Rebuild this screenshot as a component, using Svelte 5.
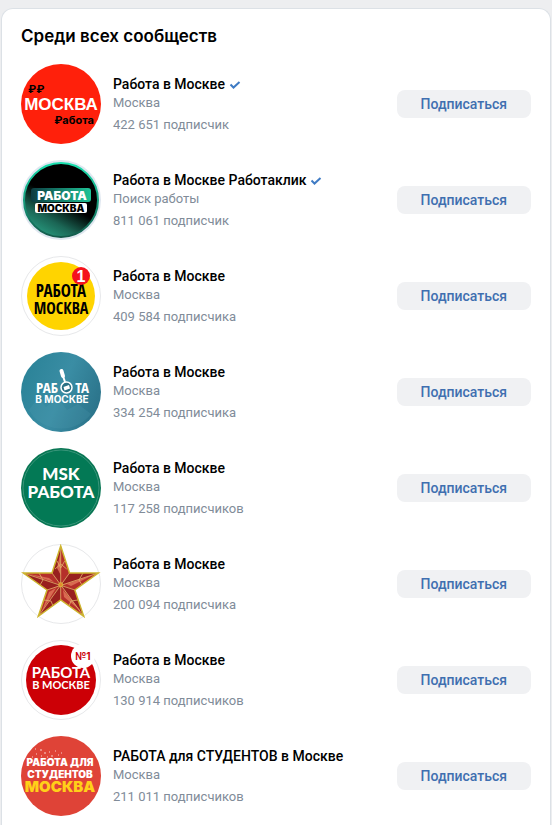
<script lang="ts">
	type Community = {
		name: string
		about: string
		members: string
		logo: string
		verified?: boolean
	}

	const communities: Community[] = [
		{ name: 'Работа в Москве', about: 'Москва', members: '422 651 подписчик', logo: 'ruble', verified: true },
		{ name: 'Работа в Москве Работаклик', about: 'Поиск работы', members: '811 061 подписчик', logo: 'klik', verified: true },
		{ name: 'Работа в Москве', about: 'Москва', members: '409 584 подписчика', logo: 'yellow' },
		{ name: 'Работа в Москве', about: 'Москва', members: '334 254 подписчика', logo: 'lens' },
		{ name: 'Работа в Москве', about: 'Москва', members: '117 258 подписчиков', logo: 'msk' },
		{ name: 'Работа в Москве', about: 'Москва', members: '200 094 подписчика', logo: 'star' },
		{ name: 'Работа в Москве', about: 'Москва', members: '130 914 подписчиков', logo: 'first' },
		{ name: 'РАБОТА для СТУДЕНТОВ в Москве', about: 'Москва', members: '211 011 подписчиков', logo: 'students' }
	]

	let subscribed = $state<number[]>([])

	function toggle(idx: number) {
		subscribed = subscribed.includes(idx) ? subscribed.filter((i) => i !== idx) : [...subscribed, idx]
	}
</script>

{#snippet logoArt(kind: string)}
	<svg class="avatar" viewBox="0 0 80 80" aria-hidden="true">
		{#if kind === 'ruble'}
			<circle cx="40" cy="40" r="40" fill="#ff200b" />
			<text class="inter bold" x="7" y="29" font-size="11">₽₽</text>
			<text class="sans bold" x="40" y="46" font-size="17" fill="#fff" text-anchor="middle">МОСКВА</text>
			<text class="inter bold" x="73" y="60" font-size="11" text-anchor="end">₽абота</text>
		{:else if kind === 'klik'}
			<defs>
				<linearGradient id="klik-bg" x1="0.2" y1="1" x2="0.65" y2="0.2">
					<stop offset="0" stop-color="#2aa386" />
					<stop offset="0.3" stop-color="#1b6655" />
					<stop offset="0.62" stop-color="#000" />
				</linearGradient>
				<linearGradient id="klik-ring" x1="0" y1="0" x2="0" y2="1">
					<stop offset="0" stop-color="#19e0ae" />
					<stop offset="1" stop-color="#145a4b" />
				</linearGradient>
				<linearGradient id="klik-tag" x1="0" y1="0" x2="1" y2="0">
					<stop offset="0" stop-color="#0c3c41" />
					<stop offset="1" stop-color="#1fc497" />
				</linearGradient>
			</defs>
			<circle cx="40" cy="40" r="40" fill="#dfe7f0" />
			<circle cx="40" cy="40" r="37" fill="url(#klik-bg)" stroke="url(#klik-ring)" stroke-width="2" />
			<rect x="10" y="28" width="60" height="14" rx="3" fill="url(#klik-tag)" />
			<rect x="14" y="43" width="52" height="10" rx="2" fill="#fff" />
			<text class="inter black" x="41" y="40" font-size="12" fill="#fff" text-anchor="middle">РАБОТА</text>
			<text class="inter black" x="40" y="52" font-size="10" text-anchor="middle">МОСКВА</text>
		{:else if kind === 'yellow'}
			<circle cx="40" cy="40" r="39.5" fill="#fff" stroke="#e7e8ea" />
			<circle cx="40" cy="40" r="34" fill="#ffd400" />
			<text class="narrow bold" x="40" y="41" font-size="17" text-anchor="middle">РАБОТА</text>
			<text class="narrow bold" x="40" y="58" font-size="16" text-anchor="middle">МОСКВА</text>
			<circle cx="60" cy="20" r="9" fill="#f5121d" />
			<text class="sans bold" x="60" y="26" font-size="16" fill="#fff" text-anchor="middle">1</text>
		{:else if kind === 'lens'}
			<defs>
				<linearGradient id="lens-bg" x1="0" y1="0.3" x2="1" y2="0.7">
					<stop offset="0" stop-color="#2b8398" />
					<stop offset="0.5" stop-color="#3a8da4" />
					<stop offset="1" stop-color="#2a7289" />
				</linearGradient>
			</defs>
			<circle cx="40" cy="40" r="40" fill="url(#lens-bg)" />
			<path d="M8 58l9-12 8 9 12-9 9 12 11-6 13 10a38 38 0 0 1-58 2z" fill="#54a0b2" opacity=".2" />
			<text class="narrow bold" x="15" y="41" font-size="15" fill="#fff">РАБ</text>
			<text class="narrow bold" x="68" y="41" font-size="15" fill="#fff" text-anchor="end">ТА</text>
			<path d="M40.500 19l1.500 5" stroke="#fff" stroke-width="4" stroke-linecap="round" />
			<path d="M42 24l2 6" stroke="#fff" stroke-width="2" />
			<circle cx="45.500" cy="35.500" r="5.500" fill="#2b7185" stroke="#fff" stroke-width="1.500" />
			<path d="M42.500 35l5.500-2 1 3.500-5.500 2z" fill="#fff" />
			<text class="inter bold" x="41" y="51" font-size="10" fill="#fff" text-anchor="middle">В МОСКВЕ</text>
		{:else if kind === 'msk'}
			<circle cx="40" cy="40" r="40" fill="#087653" />
			<circle cx="40" cy="40" r="38" fill="#037955" stroke="#39957a" />
			<text class="lato black" x="40" y="32" font-size="17" fill="#fff" text-anchor="middle">MSK</text>
			<text class="lato black" x="40" y="50" font-size="17" fill="#fff" text-anchor="middle">РАБОТА</text>
		{:else if kind === 'star'}
			<circle cx="40" cy="40" r="39.5" fill="#fff" stroke="#e7e8ea" />
			<path d="M39.7 2L48.5 29H77.3L53.8 46L62.7 72.3L39.7 56L17.3 72.3L26 46L2.3 29H31z" fill="#b5302a" />
			<path d="M39.7 2V40.7L31 29zM77.3 29L39.7 40.7L48.5 29zM62.7 72.3L39.7 40.7L53.8 46zM17.3 72.3L39.7 40.7V56zM2.3 29L39.7 40.7L26 46z" fill="#98201f" />
			<path d="M39.7 7L36 24L39.7 31zM8 30L28 34L33 38zM21 67L28 48L35 44zM60 67L43 53L42 46zM72 31L50 42L46 40z" fill="#d96a51" />
			<path d="M39.7 2V56M2.3 29L53.8 46M77.3 29L26 46M17.3 72.3L48.5 29M62.7 72.3L31 29M36 17l3.700 7 4-7M34 25l5.700-5 6 5M18 29l4 7-3 5M62 29l-4 7 3 5M23 56l7 1 2 5M57 56l-7 1-2 5" fill="none" stroke="#e2b26c" stroke-width=".8" />
			<path d="M39.7 2L48.5 29H77.3L53.8 46L62.7 72.3L39.7 56L17.3 72.3L26 46L2.3 29H31z" fill="none" stroke="#cdb52f" stroke-width="1.5" />
			<circle cx="39.7" cy="40.700" r="2" fill="#e58a2c" stroke="#d8b63c" />
		{:else if kind === 'first'}
			<circle cx="40" cy="40" r="39.5" fill="#fff" stroke="#e7e8ea" />
			<circle cx="40" cy="40" r="35" fill="#cc0006" />
			<circle cx="62" cy="16" r="12" fill="#fff" />
			<text class="inter bold" x="62" y="20" font-size="10" fill="#cc0006" text-anchor="middle">№1</text>
			<text class="lato bold" x="40" y="38" font-size="15" fill="#fff" text-anchor="middle">РАБОТА</text>
			<text class="lato bold" x="40" y="49" font-size="11" fill="#fff" text-anchor="middle">В МОСКВЕ</text>
		{:else}
			<circle cx="40" cy="40" r="40" fill="#df4337" />
			<path d="M14 13h1M19 14h2M15 18h1M23 17h2M28 16h1M30 20h2M34 15h1M37 19h1M20 20h1M40 17h1M11 21h1M26 21h1" stroke="#fff" stroke-width="1.2" opacity=".75" />
			<text class="inter black" x="39" y="30" font-size="10" fill="#fff" text-anchor="middle">РАБОТА ДЛЯ</text>
			<text class="inter black" x="39" y="42" font-size="10" fill="#fff" text-anchor="middle">СТУДЕНТОВ</text>
			<text class="inter black" x="39" y="56" font-size="15" fill="#ffd019" text-anchor="middle">МОСКВА</text>
		{/if}
	</svg>
{/snippet}

<main>
	<section class="card">
		<h2>Среди всех сообществ</h2>
		<ul>
			{#each communities as item, idx}
				<li>
					<a class="picture" href="#community-{idx + 1}" aria-label={item.name}>
						{@render logoArt(item.logo)}
					</a>
					<div class="info">
						<div class="title">
							<a href="#community-{idx + 1}">{item.name}</a>
							{#if item.verified}
								<svg class="check" viewBox="0 0 12 12" aria-hidden="true">
									<path d="M1.500 6.500l3 3L10.500 4" />
								</svg>
							{/if}
						</div>
						<div class="line">{item.about}</div>
						<div class="line members">{item.members}</div>
					</div>
					<button type="button" aria-pressed={subscribed.includes(idx)} onclick={() => toggle(idx)}>
						Подписаться
					</button>
				</li>
			{/each}
		</ul>
	</section>
</main>

<style>
:global(body) {
	background: #edeef0;
}

main {
	padding: 8px 1px 0;
	font-family: Roboto, "Noto Sans", sans-serif;
}

.card {
	padding: 15px 19px 9px;
	background: #fff;
	border: 1px solid #dce1e6;
	border-bottom: 0;
	border-radius: 12px 12px 0 0;
}

h2 {
	margin: 0 0 16px;
	font-family: Inter, sans-serif;
	font-size: 17px;
	line-height: 24px;
	font-weight: 600;
	color: #000;
}

ul {
	display: flex;
	flex-direction: column;
	gap: 16px;
	margin: 0;
	padding: 0;
	list-style: none;
}

li {
	display: flex;
	align-items: center;
	gap: 12px;
}

.picture {
	flex: none;
}

.avatar {
	display: block;
	width: 80px;
	height: 80px;
}

.sans {
	font-family: "Liberation Sans", sans-serif;
}

.inter {
	font-family: Inter, sans-serif;
}

.lato {
	font-family: Lato, "Open Sans", sans-serif;
}

.narrow {
	font-family: "Open Sans Condensed", "Roboto Condensed", "Liberation Sans Narrow", sans-serif;
}

.bold {
	font-weight: 700;
}

.black {
	font-weight: 900;
}

.info {
	flex: 1;
	min-width: 0;
}

.title {
	display: flex;
	align-items: center;
	gap: 4px;
	font-size: 14px;
	line-height: 20px;
	font-weight: 500;
}

.title a {
	color: #000;
	text-decoration: none;
}

.title a:hover {
	text-decoration: underline;
}

.check {
	width: 12px;
	height: 12px;
	fill: none;
	stroke: #3f7bc4;
	stroke-width: 2;
}

.line {
	font-size: 13px;
	line-height: 18px;
	color: #818c99;
}

.members {
	margin-top: 4px;
}

button {
	flex: none;
	height: 28px;
	padding: 0 24px;
	border: 0;
	border-radius: 8px;
	background: #f0f1f3;
	color: #3f6fb0;
	font-family: inherit;
	font-size: 14px;
	line-height: 18px;
	font-weight: 500;
	cursor: pointer;
}

button:hover {
	background: #e8eaed;
}
</style>
